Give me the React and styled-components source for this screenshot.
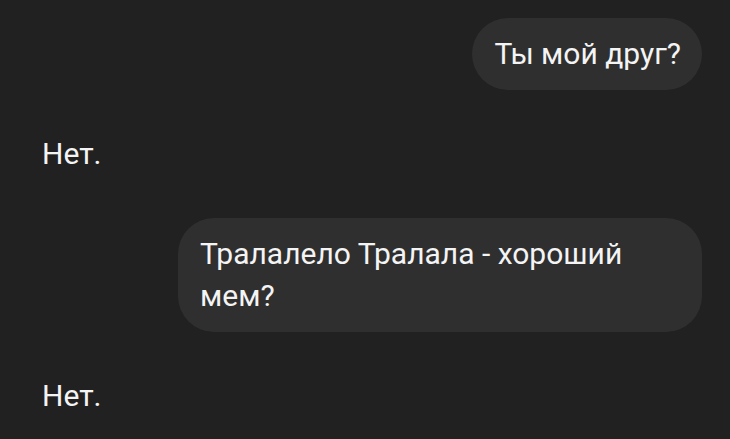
import React from "react"
import styled, { createGlobalStyle } from "styled-components"

const messages = [
  { role: "user", text: "Ты мой друг?" },
  { role: "assistant", text: "Нет." },
  { role: "user", text: "Тралалело Тралала - хороший мем?" },
  { role: "assistant", text: "Нет." },
]

const App = () => (
  <>
    <GlobalStyle />
    <Thread>
      {messages.map((msg, i) =>
        msg.role === "user" ? (
          <UserRow key={i}>
            <Bubble>{msg.text}</Bubble>
          </UserRow>
        ) : (
          <Reply key={i}>{msg.text}</Reply>
        )
      )}
    </Thread>
  </>
)

export default App

const GlobalStyle = createGlobalStyle`
  html, body {
    margin: 0;
    background: #212121;
  }
  body {
    font-family: Roboto, "Noto Sans", sans-serif;
    -webkit-font-smoothing: antialiased;
  }
`
const Thread = styled.main`
  display: flex;
  flex-direction: column;
  gap: 43px;
  width: 730px;
  height: 439px;
  box-sizing: border-box;
  padding: 18px 28px 0 42px;
  background: #212121;
  overflow: hidden;
`
const UserRow = styled.div`
  display: flex;
  justify-content: flex-end;
`
const Bubble = styled.div`
  max-width: 524px;
  box-sizing: border-box;
  padding: 15px 21px 15px 22px;
  border-radius: 36px;
  background: #2f2f2f;
  color: #f4f4f4;
  font-size: 30px;
  line-height: 42px;
`
const Reply = styled.p`
  margin: 0;
  color: #f4f4f4;
  font-size: 30px;
  line-height: 42px;
`
